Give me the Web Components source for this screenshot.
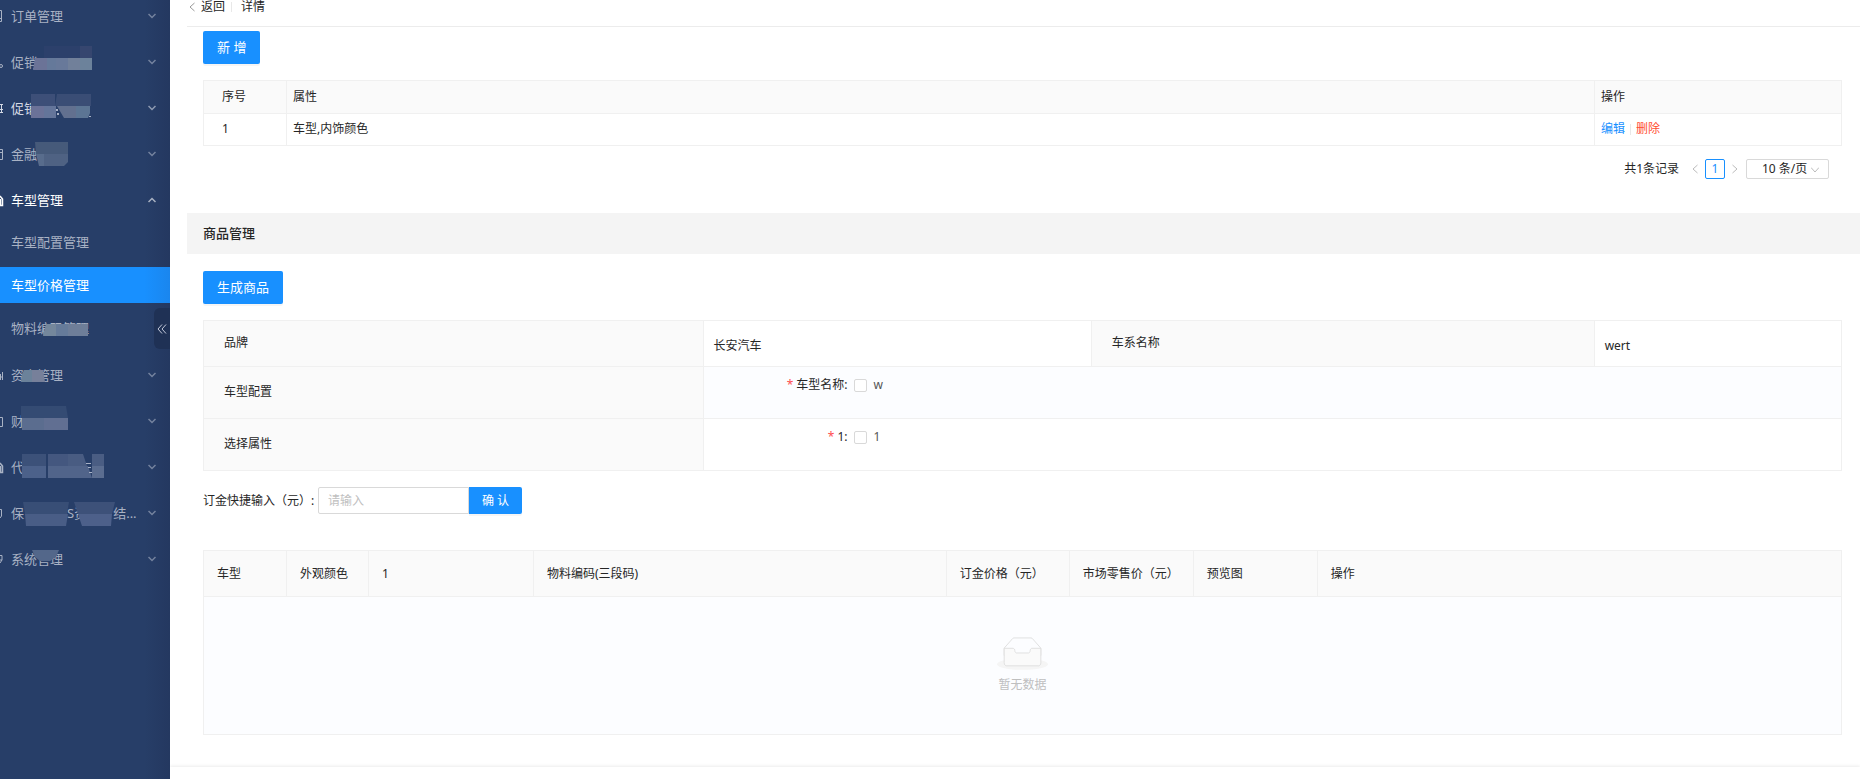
<!DOCTYPE html>
<html lang="zh-CN">
<head>
<meta charset="utf-8">
<title>车型价格管理</title>
<style>
  html, body { margin: 0; }
  body {
    font-family: "Noto Sans", "Noto Sans CJK SC", sans-serif;
    font-size: 12px;
    line-height: 18px;
    color: #262626;
    background: #fff;
    --primary: #1890ff;
    --line: #f0f0f0;
    --head: #fafafa;
    --stripe: #fcfdff;
  }
</style>
</head>
<body>
<app-shell>
  <side-menu slot="side">
    <nav-item label="订单管理" icon="doc"></nav-item>
    <nav-item label="促销" icon="dot" mask="m1"></nav-item>
    <nav-item label="促销" icon="rack" mask="m2" bright></nav-item>
    <nav-item label="金融" icon="card" mask="m3"></nav-item>
    <nav-group label="车型管理">
      <nav-leaf label="车型配置管理"></nav-leaf>
      <nav-leaf label="车型价格管理" current></nav-leaf>
      <nav-leaf label="物料编码管理" mask="m4"></nav-leaf>
    </nav-group>
    <nav-item label="资产管理" icon="bars" mask="m5"></nav-item>
    <nav-item label="财" icon="page" mask="m6"></nav-item>
    <nav-item label="代" icon="home" mask="m7"></nav-item>
    <nav-item label="保|43|S资|26|结..." icon="ring" mask="m8"></nav-item>
    <nav-item label="系统管理" icon="gear" mask="m9"></nav-item>
  </side-menu>
  <page-header></page-header>
  <page-body>
    <ui-button>新 增</ui-button>
    <attr-table></attr-table>
    <ui-pagination></ui-pagination>
  </page-body>
  <section-title>商品管理</section-title>
  <page-body>
    <ui-button>生成商品</ui-button>
    <spec-form></spec-form>
    <deposit-form></deposit-form>
    <goods-table></goods-table>
  </page-body>
</app-shell>

<script>
const RESET = `
  *, *::before, *::after { box-sizing: border-box; }
  :host { display: block; }
  :host([hidden]) { display: none; }
  a { text-decoration: none; color: inherit; }
  button, input, select { font: inherit; margin: 0; }
  table { width: 100%; border-collapse: collapse; table-layout: fixed; }
  th { font-weight: 400; text-align: left; }
  svg { display: block; }
`;

function define(name, css, html) {
  customElements.define(name, class extends HTMLElement {
    constructor() {
      super();
      this.attachShadow({ mode: 'open' });
    }
    connectedCallback() {
      const body = typeof html === 'function' ? html(this) : html;
      this.shadowRoot.innerHTML = `<style>${RESET}${css}</style>${body}`;
    }
  });
}

/* Glyphs at the left rim of the menu; only their right edge shows. */
const ICONS = {
  doc: '<path d="M0 2.5H1.500V13.500H0M0 10.500H2"/>',
  dot: '<circle cx="1" cy="12" r="1.500"/>',
  rack: '<path d="M0 4.500H3M0 9.500H3M1.500 4V13M0 12.500H3"/>',
  card: '<path d="M0 3.500H2.500V13.500H0M0 6.500H2"/>',
  home: '<path d="M0 4L2.500 7V13.500H0M.5 7V13" stroke-width="1.500"/>',
  bars: '<path d="M.5 7V13M2.500 5V13M0 10H3"/>',
  page: '<path d="M0 4.500H2.500V13.500H0"/>',
  ring: '<path d="M0 4.500H1.500V11L0 13"/>',
  gear: '<path d="M0 4.500H2V9H0M0 12L2 9"/>'
};

/* Mosaic tiles that cover part of a label: [points, colour], measured from the row's top left corner. */
const MASKS = {
  m1: [['44,7 80,7 80,19 44,19', '#2c406b'], ['80,7 92,7 92,19 80,19', '#36466f'], ['35,19 47,19 47,31 33,31', '#6b7397'], ['47,19 56,19 56,31 47,31', '#65799a'], ['56,19 68,19 68,31 56,31', '#68799a'], ['68,19 80,19 80,31 68,31', '#71809a'], ['80,19 92,19 92,31 80,31', '#6c829b']],
  m2: [['31,9 55,9 55,21 31,21', '#3d4f78'], ['57,9 91,9 91,21 55,21', '#3a4d75'], ['31,21 44,21 44,33 31,33', '#6b7298'], ['44,21 56,21 56,33 44,33', '#64759a'], ['57,21 76,21 76,33 64,33', '#62708f'], ['76,21 90,21 90,28 88,33 76,33', '#5c7594'], ['56,24 58,24 58,26 56,26', '#a9b2c6'], ['57,28 59,28 59,30 57,30', '#a9b2c6'], ['89,31 91,31 91,32 89,32', '#a9b2c6']],
  m3: [['35,11 68,11 68,23 36,23', '#465a7a'], ['36,23 44,23 44,35 39,35', '#586c8c'], ['44,23 68,23 68,31 64,35 44,35', '#4f6283']],
  m4: [['46,14 56,14 56,26 43,26', '#74879c'], ['56,14 68,14 68,26 56,26', '#667b9a'], ['68,14 88,14 88,26 68,26', '#6e7e99']],
  m5: [['24,18 32,18 32,30 21,30 22,22', '#6b829a'], ['32,18 43,18 45,30 32,30', '#77809a']],
  m6: [['21,8 66,8 68,20 21,20', '#344b73'], ['22,20 44,20 44,32 22,32', '#5b6d8f'], ['44,20 68,20 68,32 44,32', '#616f92']],
  m7: [['22,10 46,10 46,22 22,22', '#3c5179'], ['48,10 68,10 68,22 48,22', '#44577f'], ['68,10 83,10 87,22 68,22', '#495c82'], ['92,10 104,10 104,22 92,22', '#4a5d83'], ['22,22 46,22 46,34 22,34', '#4c618a'], ['48,22 88,22 92,34 48,34', '#51648a'], ['92,22 104,22 104,34 92,34', '#5b6d90'], ['86,19 91,19 91,20 86,20', '#a9b2c6'], ['88,23 91,23 91,24 88,24', '#a9b2c6'], ['89,28 92,28 92,29 89,29', '#a9b2c6']],
  m8: [['23,12 69,12 67,24 25,24', '#384e76'], ['74,12 115,12 112,24 78,24', '#3d5179'], ['25,24 68,24 66,36 26,36', '#495d86'], ['78,24 112,24 111,36 82,36', '#4d608a']],
  m9: [['32,14 59,14 56,21 50,25 40,25 35,21', '#53678a']]
};

const mask = (id) => id ? `<svg class="mask" width="120" height="46" aria-hidden="true">${
  MASKS[id].map(([p, c]) => `<polygon points="${p}" fill="${c}"/>`).join('')}</svg>` : '';
const chevron = (up) => `<svg width="8" height="8" viewBox="0 0 8 8" fill="none" stroke="currentColor" stroke-width="1.500" aria-hidden="true"><path d="${up ? 'M.5 6L4 2.500L7.500 6' : 'M.5 2L4 5.500L7.500 2'}"/></svg>`;
const rim = (id) => `<svg class="rim" width="4" height="16" viewBox="0 0 4 16" fill="none" stroke="currentColor" aria-hidden="true">${ICONS[id]}</svg>`;
const words = (s) => s.split('|').map((w, i) => i % 2 ? `<i style="width:${w}px"></i>` : `<span>${w}</span>`).join('');

define('app-shell', `
  :host { display: flex; min-height: 100vh; }
  ::slotted([slot=side]) { flex: 0 0 170px; }
  main { flex: 1; min-width: 0; display: flex; flex-direction: column; }
  .page { padding-left: 17px; flex: 1; }
  footer { height: 12px; background: #fff; box-shadow: 0 -1px 3px rgba(0,0,0,.08); }
`, `<slot name="side"></slot><main><div class="page"><slot></slot></div><footer></footer></main>`);

define('side-menu', `
  :host { position: relative; overflow: hidden; color: #a9b2c4; background: linear-gradient(90deg, #273e68 0 85%, #243860); }
  nav { margin-top: -7px; }
  button { position: absolute; right: 0; top: 308px; width: 16px; height: 41px; padding: 0; border: 0;
    border-radius: 6px 0 0 6px; background: #1f3155; color: #c3cada; display: grid; place-items: center; }
`, `<nav><slot></slot></nav>
  <button type="button" aria-label="收起菜单"><svg width="10" height="10" viewBox="0 0 10 10" fill="none" stroke="currentColor"><path d="M5 .5L1 5L5 9.500M9 .5L5 5L9 9.500"/></svg></button>`);

const ROW = `
  a { position: relative; display: flex; align-items: center; height: 46px; padding-right: 14px; font-size: 13px; line-height: 20px; }
  .rim { margin-right: 7px; }
  .text { flex: 1; display: flex; white-space: nowrap; }
  i { display: inline-block; }
  .mask { position: absolute; left: 0; top: 0; }
  .end { opacity: .6; }
`;
define('nav-item', ROW + `:host([bright]) a { color: #d5dae5; }`, (el) => `
  <a href="#">${rim(el.getAttribute('icon'))}<span class="text">${words(el.getAttribute('label'))}</span><span class="end">${chevron(false)}</span>${mask(el.getAttribute('mask'))}</a>`);

define('nav-group', ROW + `
  a { color: #fff; }
  .sub { display: grid; gap: 7px; padding: 1px 0 6px; }
`, (el) => `
  <a href="#" aria-expanded="true">${rim('home')}<span class="text">${words(el.getAttribute('label'))}</span><span class="end">${chevron(true)}</span></a>
  <div class="sub"><slot></slot></div>`);

define('nav-leaf', ROW + `
  a { height: 36px; padding-left: 11px; }
  :host([current]) a { color: #fff; background: linear-gradient(90deg, var(--primary) 0 85%, #1a86ee); }
`, (el) => `<a href="#"><span class="text">${words(el.getAttribute('label'))}</span>${mask(el.getAttribute('mask'))}</a>`);

define('page-header', `
  nav { display: flex; align-items: center; height: 27px; padding: 0 0 13px 2px; border-bottom: 1px solid #ececec; }
  a { display: flex; align-items: center; gap: 6px; }
  a svg { color: #999; }
  .bar { width: 1px; height: 10px; margin: 0 9px 0 6px; background: #e8e8e8; }
`, `<nav><a href="#"><svg width="6" height="10" viewBox="0 0 6 10" fill="none" stroke="currentColor"><path d="M5.500 1L1 5L5.500 9"/></svg>返回</a><span class="bar"></span><span>详情</span></nav>`);

define('page-body', `:host { padding: 0 18px 0 16px; }`, `<slot></slot>`);

define('ui-button', `
  :host { padding: 4px 0 16px; }
  button { display: block; height: 33px; padding: 0 14px 2px; border: 0; border-radius: 2px; color: #fff; background: var(--primary);
    font-size: 13px; line-height: 20px; box-shadow: 0 2px 0 rgba(0,0,0,.04); }
`, `<button type="button"><slot></slot></button>`);

define('attr-table', `
  th, td { border: 1px solid var(--line); padding: 0 6px 1px; height: 32px; }
  th { background: var(--head); height: 33px; padding-bottom: 0; }
  th:first-child, td:first-child { padding-left: 18px; }
  .no { width: 83px; } .op { width: 247px; }
  .edit { color: var(--primary); } .del { color: #ff4d2f; }
  .bar { display: inline-block; width: 1px; height: 11px; margin: 0 5px; vertical-align: -2px; background: #e8e8e8; }
`, `<table>
  <colgroup><col class="no"><col><col class="op"></colgroup>
  <thead><tr><th>序号</th><th>属性</th><th>操作</th></tr></thead>
  <tbody><tr><td>1</td><td>车型,内饰颜色</td><td><a class="edit" href="#">编辑</a><span class="bar"></span><a class="del" href="#">删除</a></td></tr></tbody>
</table>`);

define('ui-pagination', `
  nav { display: flex; justify-content: flex-end; align-items: center; padding: 13px 13px 34px 0; }
  .arrow { width: 20px; height: 20px; padding: 0; border: 0; background: none; color: #bbb; display: grid; place-items: center; }
  .total { margin-right: 6px; }
  .num { width: 20px; height: 20px; border: 1px solid var(--primary); border-radius: 2px; color: var(--primary); line-height: 18px; text-align: center; }
  .size { position: relative; margin-left: 1px; }
  select { appearance: none; display: block; width: 83px; height: 20px; padding: 0 0 0 15px; border: 1px solid #d9d9d9; border-radius: 2px; background: #fff; color: inherit; line-height: 18px; }
  .size svg { position: absolute; right: 10px; top: 7px; color: #bbb; pointer-events: none; }
`, `<nav aria-label="分页"><span class="total">共1条记录</span>
  <button class="arrow" type="button" aria-label="上一页"><svg width="6" height="10" viewBox="0 0 6 10" fill="none" stroke="currentColor"><path d="M5.500 1L1 5L5.500 9"/></svg></button>
  <a class="num" href="#">1</a>
  <button class="arrow" type="button" aria-label="下一页"><svg width="6" height="10" viewBox="0 0 6 10" fill="none" stroke="currentColor"><path d="M.5 1L5 5L.5 9"/></svg></button>
  <span class="size"><select aria-label="每页条数"><option>10 条/页</option></select><svg width="8" height="8" viewBox="0 0 8 8" fill="none" stroke="currentColor"><path d="M0 1.500L4 6L8 1.500"/></svg></span></nav>`);

define('section-title', `
  h2 { margin: 0 0 13px; padding: 10px 16px 11px; background: #f4f4f4; font-size: 13px; line-height: 20px; font-weight: 500; }
`, `<h2><slot></slot></h2>`);

define('spec-form', `
  th, td { border: 1px solid var(--line); padding: 0 10px; }
  th { padding: 0 20px 1px; background: var(--head); }
  .first th, .first td { height: 46px; }
  .first td { padding-top: 5px; }
  .pick th, .pick td { height: 52px; }
  .pick td { padding-top: 9px; vertical-align: top; }
  .alt td { background: var(--stripe); }
  .field { display: flex; align-items: center; }
  .name { width: 134px; text-align: right; margin-right: 6px; }
  .name::before { content: "*"; margin-right: 3px; color: #ff4d4f; }
  label { display: flex; align-items: center; gap: 7px; color: #555; }
  input { appearance: none; width: 13px; height: 13px; border: 1px solid #d9d9d9; border-radius: 2px; background: #fff; }
`, `<table>
  <colgroup><col style="width:30.500%"><col style="width:23.700%"><col style="width:30.700%"><col></colgroup>
  <tr class="first"><th>品牌</th><td>长安汽车</td><th>车系名称</th><td>wert</td></tr>
  <tr class="pick alt"><th>车型配置</th><td colspan="3"><div class="field"><span class="name">车型名称:</span><label for="m"><input id="m" type="checkbox">w</label></div></td></tr>
  <tr class="pick"><th>选择属性</th><td colspan="3"><div class="field"><span class="name">1:</span><label for="a"><input id="a" type="checkbox">1</label></div></td></tr>
</table>`);

define('deposit-form', `
  form { display: flex; align-items: center; padding: 16px 0 36px; }
  label { width: 115px; white-space: nowrap; }
  input { width: 151px; height: 27px; padding: 0 9px; border: 1px solid #d9d9d9; border-radius: 2px 0 0 2px; background: #fff; }
  input::placeholder { color: #bfbfbf; opacity: 1; }
  button { width: 53px; height: 27px; padding: 0; border: 0; border-radius: 0 2px 2px 0; color: #fff; background: var(--primary); box-shadow: 0 2px 0 rgba(0,0,0,.04); }
`, `<form><label for="d">订金快捷输入（元）:</label><input id="d" placeholder="请输入"><button type="button">确 认</button></form>`);

define('goods-table', `
  :host { padding-bottom: 29px; }
  th, td { border: 1px solid var(--line); }
  th { height: 46px; padding: 0 13px; background: var(--head); white-space: nowrap; }
  td { height: 138px; background: var(--stripe); color: #bfbfbf; }
  .empty { display: grid; justify-items: center; gap: 6px; }
`, `<table>
  <colgroup><col style="width:83px"><col style="width:82px"><col style="width:165px"><col><col style="width:123px"><col style="width:124px"><col style="width:124px"><col style="width:32%"></colgroup>
  <thead><tr><th>车型</th><th>外观颜色</th><th>1</th><th>物料编码(三段码)</th><th>订金价格（元）</th><th>市场零售价（元）</th><th>预览图</th><th>操作</th></tr></thead>
  <tbody><tr><td colspan="8"><div class="empty">
    <svg width="51" height="33" viewBox="0 0 64 41" aria-hidden="true"><g transform="translate(0 1)" fill="none"><ellipse fill="#f5f5f5" cx="32" cy="33" rx="32" ry="7"/><g stroke="#d9d9d9"><path d="M55 12.760L44.854 1.258C44.367.474 43.656 0 42.907 0H21.093c-.749 0-1.460.474-1.947 1.257L9 12.761V22h46v-9.240z"/><path d="M41.613 15.931c0-1.605.994-2.930 2.227-2.931H55v18.137C55 33.260 53.680 35 52.050 35h-40.100C10.320 35 9 33.259 9 31.137V13h11.160c1.233 0 2.227 1.323 2.227 2.928v.022c0 1.605 1.005 2.901 2.237 2.901h14.752c1.232 0 2.237-1.308 2.237-2.913v-.007z" fill="#fafafa"/></g></g></svg>
    <span>暂无数据</span></div></td></tr></tbody>
</table>`);
</script>
</body>
</html>
